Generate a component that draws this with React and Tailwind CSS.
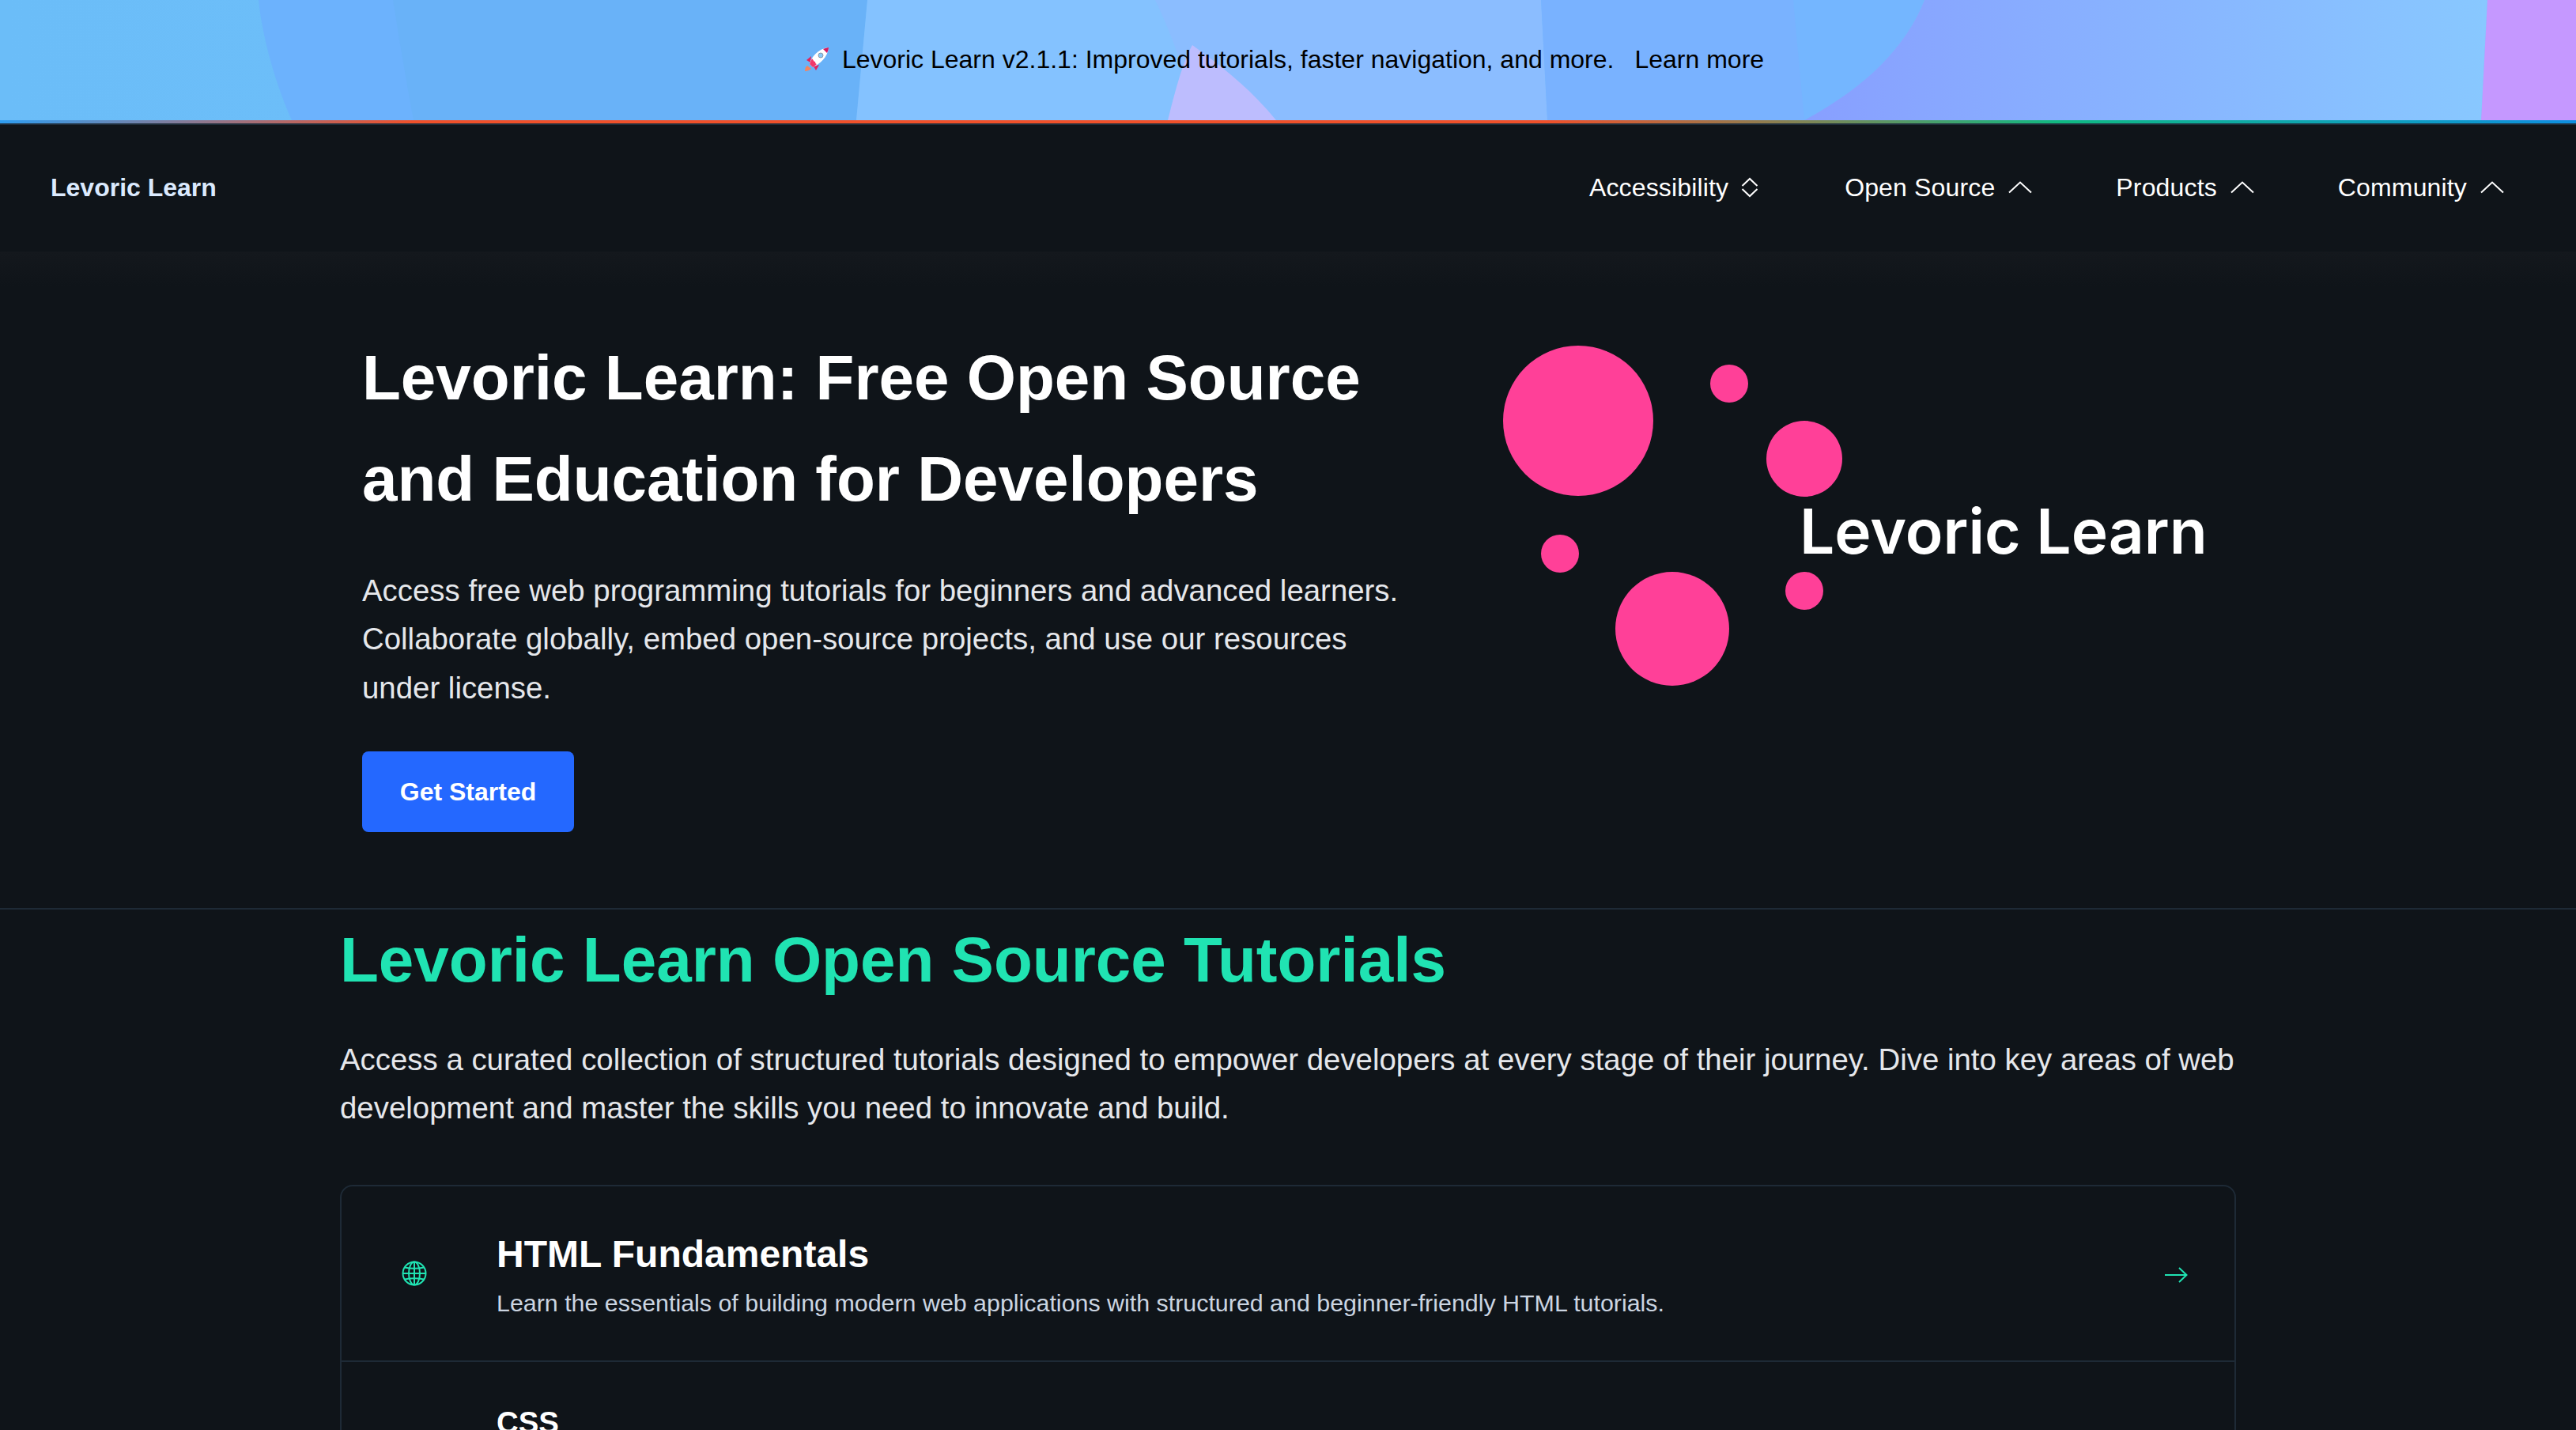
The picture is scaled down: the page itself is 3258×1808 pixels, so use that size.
function BannerArt() {
  return (
    <svg className="absolute inset-0 w-full h-full" viewBox="0 0 3258 152" preserveAspectRatio="none">
      <defs>
        <linearGradient id="sky" x1="0" x2="1" y1="0" y2="0">
          <stop offset="0" stopColor="#6bbdf8" />
          <stop offset="1" stopColor="#74c4fd" />
        </linearGradient>
        <linearGradient id="violet" x1="0" x2="1" y1="0" y2="0">
          <stop offset="0" stopColor="#889fff" />
          <stop offset="1" stopColor="#88c8ff" />
        </linearGradient>
      </defs>
      <rect width="3258" height="152" fill="url(#sky)" />
      <path d="M327 0 C332 50 350 110 369 152 H1083 L1097 0 Z" fill="#6cb2fd" />
      <path d="M497 0 C505 50 515 110 523 152 H1083 L1097 0 Z" fill="#69b2f8" />
      <path d="M1097 0 L1083 152 H1957 L1949 0 Z" fill="#84c2ff" />
      <path d="M1461 0 C1480 40 1500 90 1513 152 H1957 L1949 0 Z" fill="#8bbdff" />
      <path d="M1508 57 C1495 80 1485 120 1477 152 H1614 C1580 110 1540 80 1508 57 Z" fill="#bdbdfe" />
      <path d="M1949 0 L1957 152 H2282 L2434 0 Z" fill="#79b2ff" />
      <path d="M2268 0 L2282 152 C2360 110 2410 60 2434 0 Z" fill="#74b6ff" />
      <path d="M2434 0 C2410 60 2360 110 2282 152 H3138 L3146 0 Z" fill="url(#violet)" />
      <path d="M3146 0 L3138 152 H3258 V0 Z" fill="#c598ff" />
    </svg>
  );
}

function Rocket() {
  return (
    <svg viewBox="0 0 32 32" className="w-8 h-8 shrink-0">
      <path d="M4 24 C1 26 1 30 1 31 C3 31 7 30 9 28 Z" fill="#f4845f" />
      <path d="M9 12 L3 17 L8 20 Z" fill="#e0245e" />
      <path d="M19 23 L15 30 L12 25 Z" fill="#e0245e" />
      <path d="M7 22 C9 13 17 3 31 1 C30 13 20 22 11 26 Z" fill="#fff" />
      <path d="M24 3 C27 2 29 1 31 1 C31 3 30 6 29 8 Z" fill="#d81b60" />
      <path d="M7 22 C8 19 9 17 10 15 C12 17 12 19 14 19 C14 21 15 22 16 22 C14 24 13 25 11 26 Z" fill="#f0386b" />
      <circle cx="21" cy="11" r="3" fill="#88c9f9" stroke="#8a9aa8" strokeWidth="1" />
    </svg>
  );
}

function Logo() {
  return (
    <svg viewBox="0 0 960 440" className="w-[960px] h-[440px] shrink-0">
      <g fill="#ff4098">
        <circle cx="95" cy="95" r="95" />
        <circle cx="286" cy="48" r="24" />
        <circle cx="381" cy="143" r="48" />
        <circle cx="72" cy="263" r="24" />
        <circle cx="214" cy="358" r="72" />
        <circle cx="381" cy="310" r="24" />
      </g>
      <text x="375" y="263" fill="#fff" fontSize="78.4" fontWeight="600" fontFamily="Inter, sans-serif">
        Levoric Learn
      </text>
    </svg>
  );
}

function ChevronUpThin() {
  return (
    <svg viewBox="0 0 32 32" className="w-8 h-8" fill="none" stroke="currentColor" strokeWidth="2">
      <path d="M2 22.5 L16 9.5 L30 22.5" />
    </svg>
  );
}

function ChevronSort() {
  return (
    <svg viewBox="0 0 26 32" className="w-[26px] h-8" fill="none" stroke="currentColor" strokeWidth="2">
      <path d="M1.5 14 L11 5 L20.5 14" />
      <path d="M1.5 18 L11 27 L20.5 18" />
    </svg>
  );
}

function GlobeGrid() {
  return (
    <svg viewBox="0 0 32 32" className="w-8 h-8 shrink-0 text-[#20e3b2]" fill="none" stroke="currentColor" strokeWidth="2">
      <circle cx="16" cy="16" r="14.5" />
      <ellipse cx="16" cy="16" rx="7" ry="14.5" />
      <path d="M16 1.5 V30.5" />
      <path d="M1.5 16 H30.5" />
      <path d="M4 8.5 C11 10 21 10 28 8.5" />
      <path d="M4 23.5 C11 22 21 22 28 23.5" />
    </svg>
  );
}

function ArrowThin() {
  return (
    <svg viewBox="0 0 32 32" className="w-8 h-8 shrink-0 text-[#20e3b2]" fill="none" stroke="currentColor" strokeWidth="2">
      <path d="M2 18 H29" />
      <path d="M20 9 L29.5 18 L20 27" />
    </svg>
  );
}

function NavItem({ label, children }) {
  return (
    <div className="flex items-center gap-4 text-white">
      <span className="tracking-[0.15px]">{label}</span>
      {children || <ChevronUpThin />}
    </div>
  );
}

export default function App() {
  return (
    <div className="h-screen overflow-hidden bg-[#0f1419] font-['Liberation_Sans',Arial,sans-serif]">
      <div className="relative h-[152px] flex items-center justify-center pb-[2px]">
        <BannerArt />
        <div className="relative flex items-center gap-4 pr-[10px] text-[32px] text-black">
          <Rocket />
          <div className="flex gap-[26px]">
            <span>Levoric Learn v2.1.1: Improved tutorials, faster navigation, and more.</span>
            <span>Learn more</span>
          </div>
        </div>
      </div>
      <div className="h-1 bg-[linear-gradient(90deg,#2f9df0_0%,#f0512a_16%,#f0512a_60%,#10b981_80%,#0e8fe0_100%)]" />
      <div className="h-[2px] bg-[#1f2d3a]" />

      <nav className="h-[160px] pl-16 pr-[90px] pb-[2px] flex items-center justify-between text-[32px]">
        <span className="font-bold text-[#dbeafe]">Levoric Learn</span>
        <div className="flex items-center gap-[105px]">
          <NavItem label="Accessibility">
            <ChevronSort />
          </NavItem>
          <NavItem label="Open Source" />
          <NavItem label="Products" />
          <NavItem label="Community" />
        </div>
      </nav>

      <section className="h-[832px] border-b-2 border-[#1e2a36] pl-[458px] flex bg-[linear-gradient(180deg,#14181d_0px,#0f1419_44px)]">
        <div className="w-[1340px] pt-[96px]">
          <h1 className="text-[80px] leading-[128px] font-bold text-white">
            Levoric Learn: Free Open Source
            <br />
            and Education for Developers
          </h1>
          <p className="mt-[46px] text-[38.4px] leading-[61.44px] text-[#e5e7eb]">
            Access free web programming tutorials for beginners and advanced learners.
            <br />
            Collaborate globally, embed open-source projects, and use our resources
            <br />
            under license.
          </p>
          <button className="mt-[50px] w-[268px] h-[102px] rounded-lg bg-[#2468ff] text-[32px] font-bold text-white">
            Get Started
          </button>
        </div>
        <div className="pt-[119px] pl-[103px]">
          <Logo />
        </div>
      </section>

      <section className="px-[430px]">
        <h2 className="text-[80px] leading-[128px] font-bold text-[#20e3b2]">Levoric Learn Open Source Tutorials</h2>
        <p className="mt-[31px] text-[38.4px] leading-[61.44px] text-[#e5e7eb]">
          Access a curated collection of structured tutorials designed to empower developers at every stage of their journey. Dive into key areas of web development and master the skills you need to innovate and build.
        </p>
        <div className="mt-[66px] rounded-2xl border-2 border-[#1e2a36]">
          <div className="h-[222px] flex items-center border-b-2 border-[#1e2a36] pl-[76px] pr-[58px]">
            <GlobeGrid />
            <div className="ml-[88px] flex-1 pt-[5px]">
              <h3 className="text-[48px] leading-[64px] font-bold text-white">HTML Fundamentals</h3>
              <p className="mt-[5px] text-[30.4px] leading-[48px] text-[#cbd5e1]">
                Learn the essentials of building modern web applications with structured and beginner-friendly HTML tutorials.
              </p>
            </div>
            <ArrowThin />
          </div>
          <div className="pl-[196px] pt-[45px]">
            <h3 className="text-[38.4px] leading-[64px] font-bold text-white">CSS</h3>
          </div>
        </div>
      </section>
    </div>
  );
}
